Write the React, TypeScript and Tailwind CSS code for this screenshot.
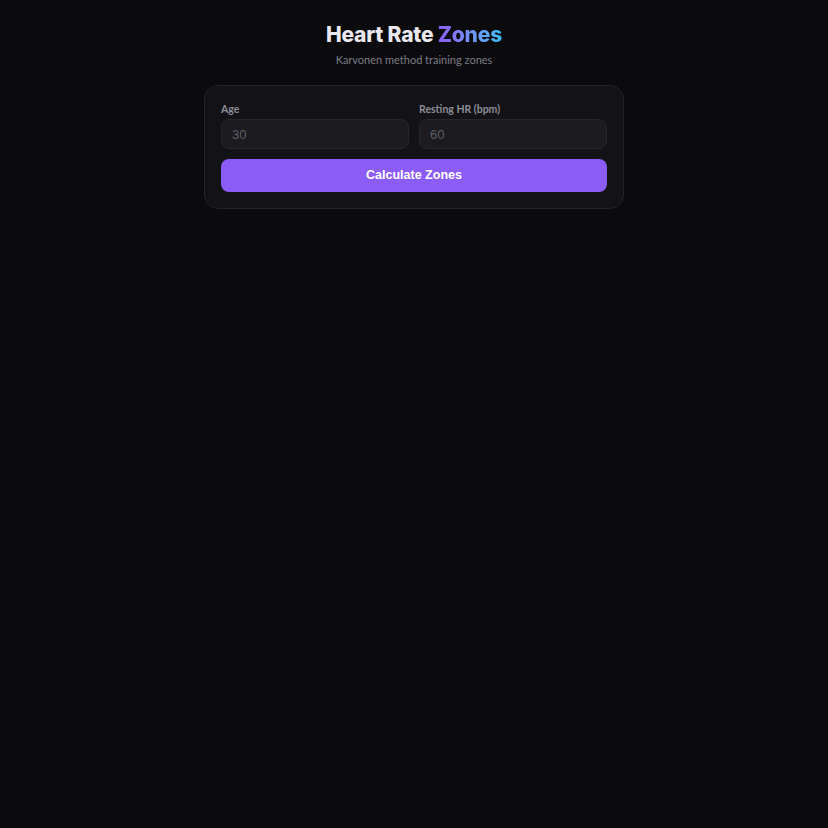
import React, { useState } from "react";

export default function App() {
  const [age, setAge] = useState("");
  const [rest, setRest] = useState("");

  return (
    <div className="min-h-[828px] w-full bg-[#0b0b0e] font-['Lato',sans-serif]">
      <div className="mx-auto w-[420px] pt-[22px]">
        {/* Header */}
        <div className="flex flex-col items-center">
          <h1 className="font-['Inter',sans-serif] text-[21px] font-extrabold leading-[26px] tracking-[-0.2px] text-[#e8e8ee]">
            Heart Rate{" "}
            <span className="bg-gradient-to-r from-[#8b5cf6] to-[#38bdf8] bg-clip-text text-transparent">
              Zones
            </span>
          </h1>
          <p className="mt-[5px] text-[11px] leading-[14px] text-[#7c7c86]">
            Karvonen method training zones
          </p>
        </div>

        {/* Form card */}
        <div className="mt-[18px] rounded-[14px] border border-[#222227] bg-[#131317] px-4 pb-4 pt-[16px]">
          <div className="grid grid-cols-2 gap-[10px]">
            <label className="flex flex-col gap-[3px]">
              <span className="text-[10.5px] font-bold leading-[14px] text-[#8e8e98]">Age</span>
              <input
                value={age}
                onChange={(e) => setAge(e.target.value)}
                placeholder="30"
                className="h-[30px] rounded-[8px] border border-[#26262b] bg-[#1c1c20] px-[10px] font-['Liberation_Sans',sans-serif] text-[13px] text-[#d4d4d8] placeholder:text-[#5e5e66] focus:outline-none"
              />
            </label>
            <label className="flex flex-col gap-[3px]">
              <span className="text-[10.5px] font-bold leading-[14px] text-[#8e8e98]">Resting HR (bpm)</span>
              <input
                value={rest}
                onChange={(e) => setRest(e.target.value)}
                placeholder="60"
                className="h-[30px] rounded-[8px] border border-[#26262b] bg-[#1c1c20] px-[10px] font-['Liberation_Sans',sans-serif] text-[13px] text-[#d4d4d8] placeholder:text-[#5e5e66] focus:outline-none"
              />
            </label>
          </div>
          <button className="mt-[10px] h-[33px] w-full rounded-[8px] bg-[#8b5cf6] font-['Liberation_Sans',sans-serif] text-[12.5px] font-bold text-white hover:bg-[#7c4dec]">
            Calculate Zones
          </button>
        </div>
      </div>
    </div>
  );
}
